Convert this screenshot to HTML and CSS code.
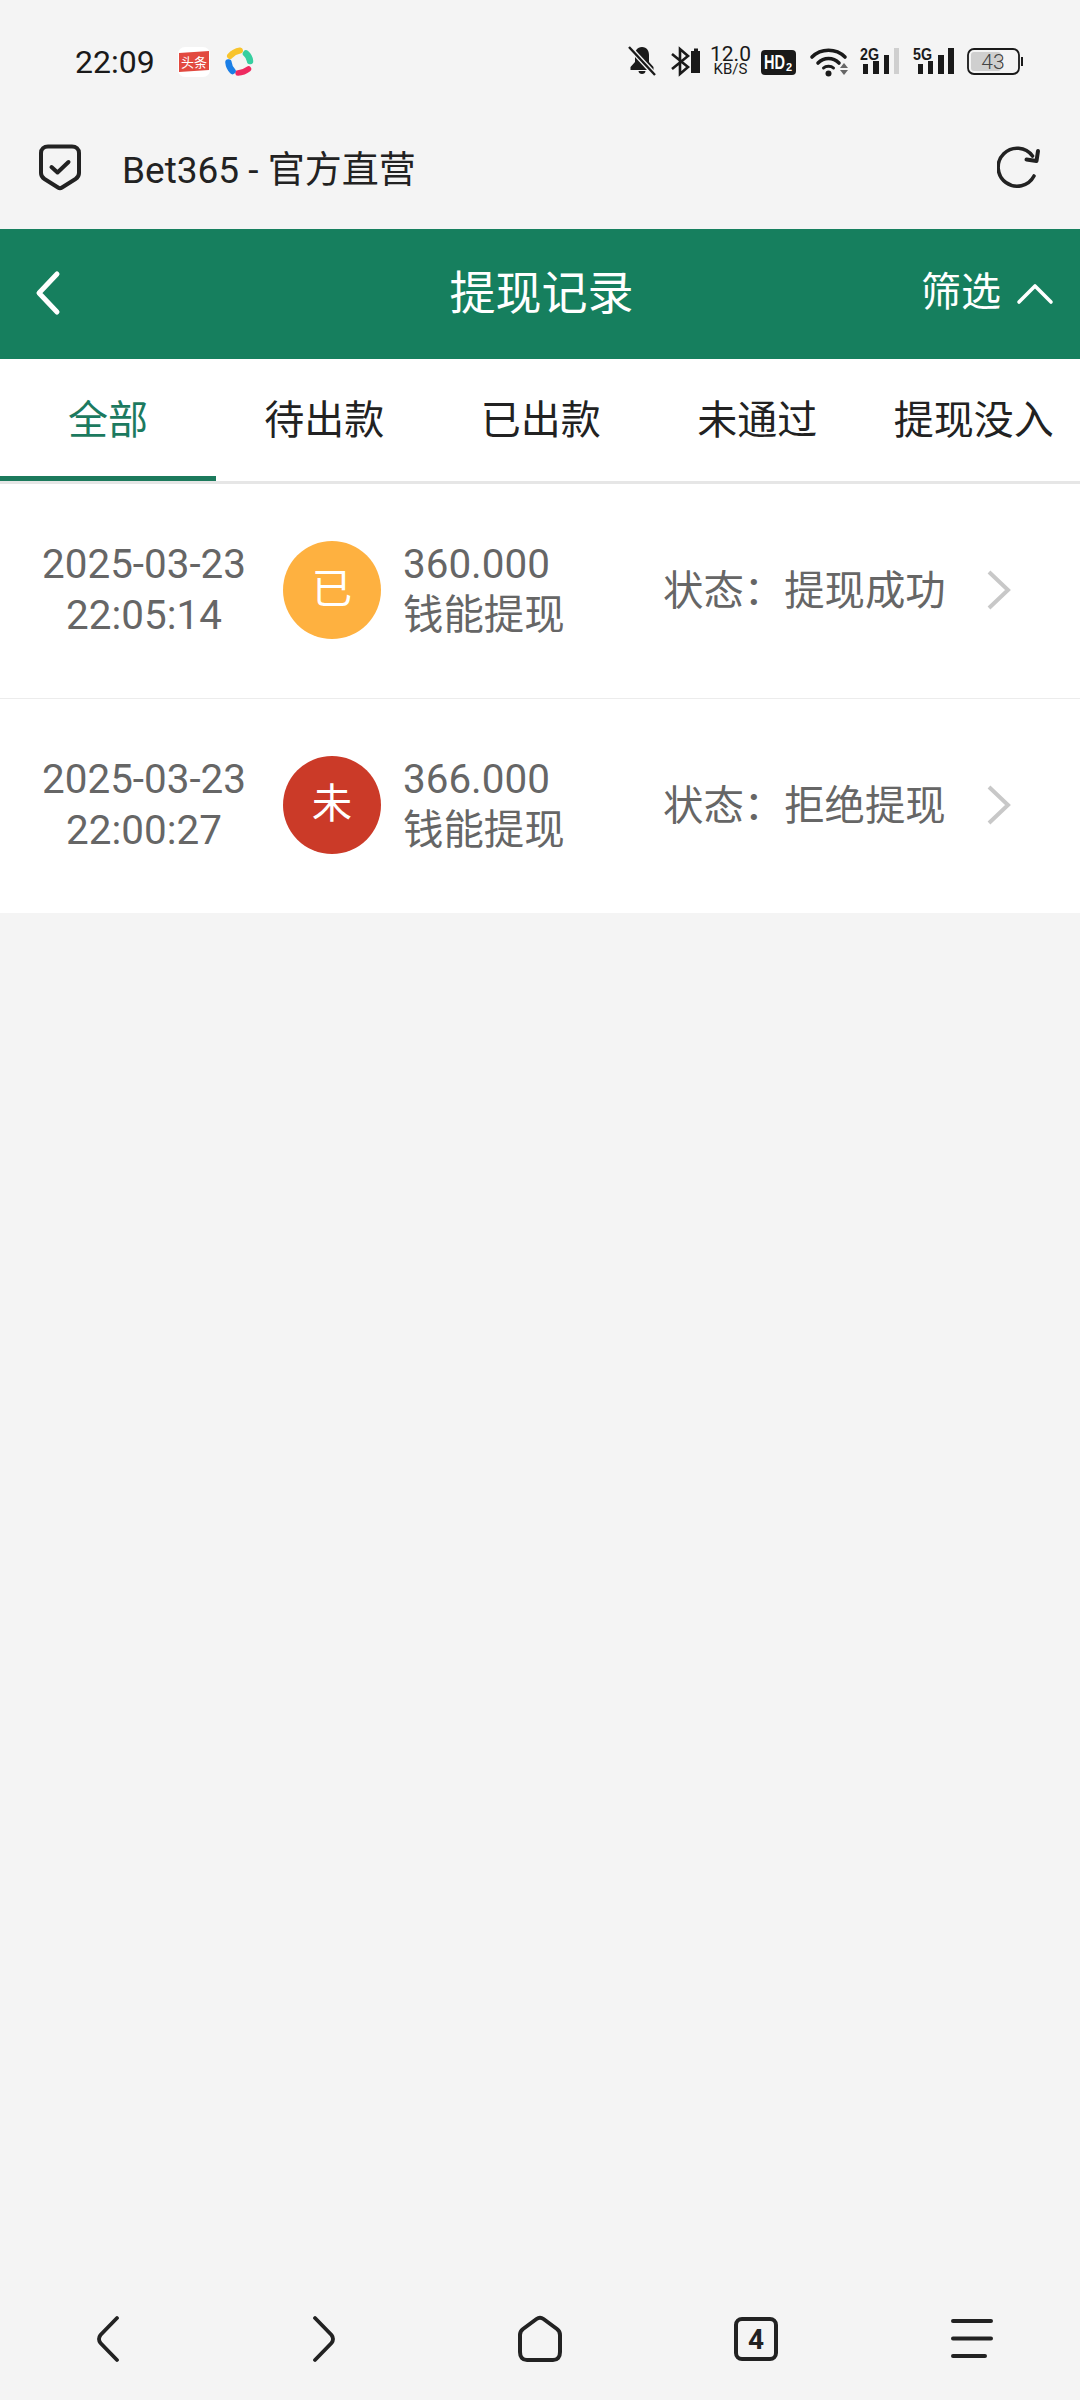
FILE: index.html
```html
<!DOCTYPE html>
<html lang="zh">
<head>
<meta charset="utf-8">
<title>提现记录</title>
<link rel="stylesheet" href="styles.css">
</head>
<body>
<div class="page">
  <div class="statusbar">
    <span class="time">22:09</span>
    <svg class="ic-toutiao" width="32" height="30" viewBox="0 0 32 30">
      <rect width="32" height="30" rx="7" fill="#fff"/>
      <path d="M1 6 L31 4 L31 23 L1 25 Z" fill="#e2493f"/>
      <text x="16" y="20" class="sb-tt" text-anchor="middle">头条</text>
    </svg>
    <svg class="ic-q" width="30" height="30" viewBox="0 0 30 30">
      <path d="M6 9 Q10 4.500 16 3.500" fill="none" stroke="#f8c42c" stroke-width="6" stroke-linecap="round"/>
      <path d="M22 6.500 Q25.500 9.500 26 14" fill="none" stroke="#36cfa0" stroke-width="6.500" stroke-linecap="round"/>
      <path d="M14 26 Q20 25.500 24.500 22" fill="none" stroke="#ee2a5f" stroke-width="5.500" stroke-linecap="round"/>
      <path d="M4.500 15.500 Q5 20.500 8.500 24" fill="none" stroke="#1a7ee6" stroke-width="6.500" stroke-linecap="round"/>
    </svg>
    <svg class="sb-right" width="396" height="46" viewBox="0 -6 396 46">
      <!-- bell off -->
      <path d="M14 2 C9 2 7 6 7 10 L7 17 L2.500 22 L2.500 25 L25.500 25 L25.500 22 L21 17 L21 10 C21 6 19 2 14 2Z" fill="#1a1a1a"/>
      <path d="M10.500 26 H17.500 C17.500 30 10.500 30 10.500 26Z" fill="#1a1a1a"/>
      <path d="M1 2 L27 30" stroke="#f4f4f4" stroke-width="5"/>
      <path d="M1 2 L27 30" stroke="#1a1a1a" stroke-width="2.400"/>
      <!-- bluetooth + small battery -->
      <path d="M44 9 L60 22 L52 29 L52 4 L60 11 L44 24" fill="none" stroke="#1a1a1a" stroke-width="2.600"/>
      <path d="M66 6 V3.500 H70 V6 H72 V28 H63 V6Z" fill="#1a1a1a"/>
      <!-- speed -->
      <text x="102.500" y="16" class="sb-speed" text-anchor="middle">12.0</text>
      <text x="102.500" y="29" class="sb-unit" text-anchor="middle">KB/S</text>
      <!-- HD2 -->
      <rect x="133" y="5" width="35" height="25" rx="4" fill="#1a1a1a"/>
      <text x="136" y="24" class="sb-hd" textLength="21" lengthAdjust="spacingAndGlyphs">HD</text>
      <text x="158" y="26" class="sb-hd2">2</text>
      <!-- wifi -->
      <path d="M184 12 C193 3 208 3 217 12" fill="none" stroke="#1a1a1a" stroke-width="3.600" stroke-linecap="round"/>
      <path d="M190 18 C196 12 205 12 211 18" fill="none" stroke="#1a1a1a" stroke-width="3.600" stroke-linecap="round"/>
      <path d="M195.500 23 C198 20.500 203 20.500 205.500 23" fill="none" stroke="#1a1a1a" stroke-width="3" stroke-linecap="round"/>
      <circle cx="200.500" cy="28.500" r="3" fill="#1a1a1a"/>
      <path d="M212 23 L216 18 L220 23Z" fill="#666"/>
      <path d="M212 25 L216 30 L220 25Z" fill="#666"/>
      <!-- 2G -->
      <text x="232" y="15" class="sb-net" textLength="19" lengthAdjust="spacingAndGlyphs">2G</text>
      <rect x="235" y="19" width="5" height="10" fill="#1a1a1a"/>
      <rect x="245" y="16" width="6" height="13" fill="#1a1a1a"/>
      <rect x="256" y="10" width="5" height="19" fill="#1a1a1a"/>
      <rect x="266" y="3" width="5" height="26" fill="#cfcfcf"/>
      <!-- 5G -->
      <text x="285" y="15" class="sb-net" textLength="19" lengthAdjust="spacingAndGlyphs">5G</text>
      <rect x="290" y="19" width="5" height="10" fill="#1a1a1a"/>
      <rect x="300" y="16" width="5" height="13" fill="#1a1a1a"/>
      <rect x="310" y="10" width="6" height="19" fill="#1a1a1a"/>
      <rect x="320" y="3" width="6" height="26" fill="#1a1a1a"/>
      <!-- battery -->
      <rect x="340" y="4" width="51" height="25" rx="6" fill="none" stroke="#1a1a1a" stroke-width="1.800"/>
      <rect x="343" y="7" width="30" height="19" rx="3" fill="#cfcfcf"/>
      <rect x="393" y="12" width="2" height="9" fill="#1a1a1a"/>
      <text x="365" y="24" class="sb-batt" text-anchor="middle">43</text>
    </svg>
  </div>

  <div class="urlbar">
    <svg class="ic-shield" width="44" height="48" viewBox="0 0 44 48">
      <path d="M10 3.500 H34 C38 3.500 41 6 41 10 V30 C41 33 40 34.500 37.500 36 L24 44.500 C22.500 45.500 21.500 45.500 20 44.500 L6.500 36 C4 34.500 3 33 3 30 V10 C3 6 6 3.500 10 3.500Z" fill="none" stroke="#222" stroke-width="4"/>
      <path d="M13.500 24 L19.500 29.500 L30.500 19" fill="none" stroke="#222" stroke-width="4" stroke-linecap="round" stroke-linejoin="round"/>
    </svg>
    <span class="urltext">Bet365 - 官方直营</span>
    <svg class="ic-refresh" width="44" height="44" viewBox="0 0 44 44">
      <path d="M35.500 11 A 19 19 0 1 0 37 31" fill="none" stroke="#222" stroke-width="3.600" stroke-linecap="round"/>
      <path d="M41 6 L39.500 16 L29.500 14.500" fill="none" stroke="#222" stroke-width="4" stroke-linecap="round" stroke-linejoin="round"/>
    </svg>
  </div>

  <header class="topbar">
    <svg class="ic-back" width="30" height="46" viewBox="0 0 30 46">
      <path d="M24 4 L6 23 L24 42" fill="none" stroke="#fff" stroke-width="5" stroke-linecap="round" stroke-linejoin="round"/>
    </svg>
    <h1 class="title">提现记录</h1>
    <div class="filter">
      <span>筛选</span>
      <svg width="38" height="24" viewBox="0 0 38 24">
        <path d="M3 21 L19 5 L35 21" fill="none" stroke="#fff" stroke-width="3.600" stroke-linecap="round" stroke-linejoin="round"/>
      </svg>
    </div>
  </header>

  <nav class="tabs">
    <div class="tab active">全部</div>
    <div class="tab">待出款</div>
    <div class="tab">已出款</div>
    <div class="tab">未通过</div>
    <div class="tab">提现没入</div>
  </nav>

  <main class="list">
    <div class="row">
      <div class="date">2025-03-23<br>22:05:14</div>
      <div class="badge badge-ok">已</div>
      <div class="info">360.000<br>钱能提现</div>
      <div class="status">状态：提现成功</div>
      <svg class="chev" width="26" height="42" viewBox="0 0 26 42">
        <path d="M3 3 L22 21 L3 39" fill="none" stroke="#c8c8c8" stroke-width="4"/>
      </svg>
    </div>
    <div class="row">
      <div class="date">2025-03-23<br>22:00:27</div>
      <div class="badge badge-no">未</div>
      <div class="info">366.000<br>钱能提现</div>
      <div class="status">状态：拒绝提现</div>
      <svg class="chev" width="26" height="42" viewBox="0 0 26 42">
        <path d="M3 3 L22 21 L3 39" fill="none" stroke="#c8c8c8" stroke-width="4"/>
      </svg>
    </div>
  </main>

  <footer class="bottomnav">
    <div class="navitem">
      <svg width="24" height="48" viewBox="0 0 24 48">
        <path d="M21 3 L4.500 20 Q1.500 24 4.500 28 L21 45" fill="none" stroke="#222" stroke-width="3.800" stroke-linecap="round"/>
      </svg>
    </div>
    <div class="navitem">
      <svg width="24" height="48" viewBox="0 0 24 48">
        <path d="M3 3 L19.500 20 Q22.500 24 19.500 28 L3 45" fill="none" stroke="#222" stroke-width="3.800" stroke-linecap="round"/>
      </svg>
    </div>
    <div class="navitem">
      <svg width="46" height="48" viewBox="0 0 46 48">
        <path d="M19.500 4 C21.500 2.500 24.500 2.500 26.500 4 L40 14 C42 15.500 43 17 43 20 V37 C43 42 40.500 45 36 45 H10 C5.500 45 3 42 3 37 V20 C3 17 4 15.500 6 14Z" fill="none" stroke="#222" stroke-width="4" stroke-linejoin="round"/>
      </svg>
    </div>
    <div class="navitem">
      <div class="tabcount">4</div>
    </div>
    <div class="navitem">
      <svg width="44" height="44" viewBox="0 0 44 44">
        <path d="M3 4 H41 M3 21.500 H41 M3 39 H35" fill="none" stroke="#222" stroke-width="4" stroke-linecap="round"/>
      </svg>
    </div>
  </footer>
</div>
</body>
</html>
```

FILE: styles.css
```css
* { box-sizing: border-box; }
html, body { margin: 0; padding: 0; }
body {
  font-family: Roboto, "Noto Sans CJK SC", sans-serif;
  background: #f4f4f4;
  color: #222;
}
.page {
  width: 1080px;
  height: 2400px;
  display: flex;
  flex-direction: column;
  background: #f4f4f4;
}

/* status bar */
.statusbar {
  height: 124px;
  display: flex;
  align-items: center;
  padding-left: 75px;
  padding-right: 56px;
  flex: none;
}
.time { font-size: 32px; color: #1a1a1a; width: 103px; }
.ic-toutiao { margin-right: 14px; }
.sb-right { margin-left: auto; }
.sb-tt { font-size: 13px; fill: #fff; font-family: "Noto Sans CJK SC", sans-serif; }
.sb-speed { font-size: 21px; fill: #1a1a1a; font-family: Roboto, sans-serif; }
.sb-unit { font-size: 15px; fill: #1a1a1a; font-family: Roboto, sans-serif; }
.sb-hd { font-size: 20px; font-weight: 700; fill: #fff; font-family: "Liberation Sans", sans-serif; }
.sb-hd2 { font-size: 11px; font-weight: 700; fill: #fff; font-family: "Liberation Sans", sans-serif; }
.sb-net { font-size: 17px; font-weight: 700; fill: #1a1a1a; font-family: "Liberation Sans", sans-serif; }
.sb-batt { font-size: 21px; fill: #444; font-family: Roboto, sans-serif; font-weight: 300; }

/* url bar */
.urlbar {
  height: 105px;
  padding: 0 39px 20px 38px;
  display: flex;
  align-items: center;
  flex: none;
}
.urltext { font-size: 37px; color: #222; margin-left: 40px; }
.ic-refresh { margin-left: auto; }

/* green header */
.topbar {
  height: 130px;
  background: #167f5e;
  color: #fff;
  display: grid;
  grid-template-columns: 1fr auto 1fr;
  align-items: center;
  padding: 0 26px 2px 33px;
  flex: none;
}
.title { margin: 0 4px 0 0; font-size: 46px; font-weight: 400; line-height: 1; }
.filter {
  justify-self: end;
  display: flex;
  align-items: center;
  gap: 15px;
  font-size: 40px;
  line-height: 1;
}

/* tabs */
.tabs {
  height: 125px;
  background: #fff;
  display: flex;
  border-bottom: 3px solid #e6e6e6;
  overflow: hidden;
  flex: none;
}
.tab {
  width: 216.500px;
  height: 122px;
  font-size: 40px;
  color: #222;
  display: flex;
  align-items: center;
  justify-content: center;
  padding-bottom: 7px;
  white-space: nowrap;
  flex: none;
}
.tab.active {
  width: 216px;
  color: #1c7a5f;
  padding-bottom: 2px;
  border-bottom: 5px solid #1c7a5c;
}

/* records */
.list { background: #fff; flex: none; }
.row {
  height: 214.500px;
  display: flex;
  align-items: center;
  padding-bottom: 2px;
  font-size: 40.400px;
  line-height: 51px;
  color: #666;
  border-bottom: 1px solid #ececec;
}
.row:last-child { border-bottom: 0; }
.date { width: 283px; padding-left: 5px; text-align: center; }
.badge {
  width: 98px;
  height: 98px;
  border-radius: 50%;
  color: #fff;
  display: flex;
  align-items: center;
  justify-content: center;
  margin-right: 22px;
}
.badge-ok { background: #feb140; }
.badge-no { background: #cb3a28; }
.info { width: 260px; }
.status { width: 323px; padding-top: 3px; white-space: nowrap; }
.chev { flex: none; }

/* bottom nav */
.bottomnav {
  margin-top: auto;
  height: 122px;
  display: flex;
  flex: none;
}
.navitem {
  width: 216px;
  display: flex;
  align-items: center;
  justify-content: center;
}
.tabcount {
  width: 44px;
  height: 44px;
  border: 4px solid #222;
  border-radius: 8px;
  font-size: 28px;
  font-weight: 700;
  display: flex;
  align-items: center;
  justify-content: center;
  color: #222;
}
```
